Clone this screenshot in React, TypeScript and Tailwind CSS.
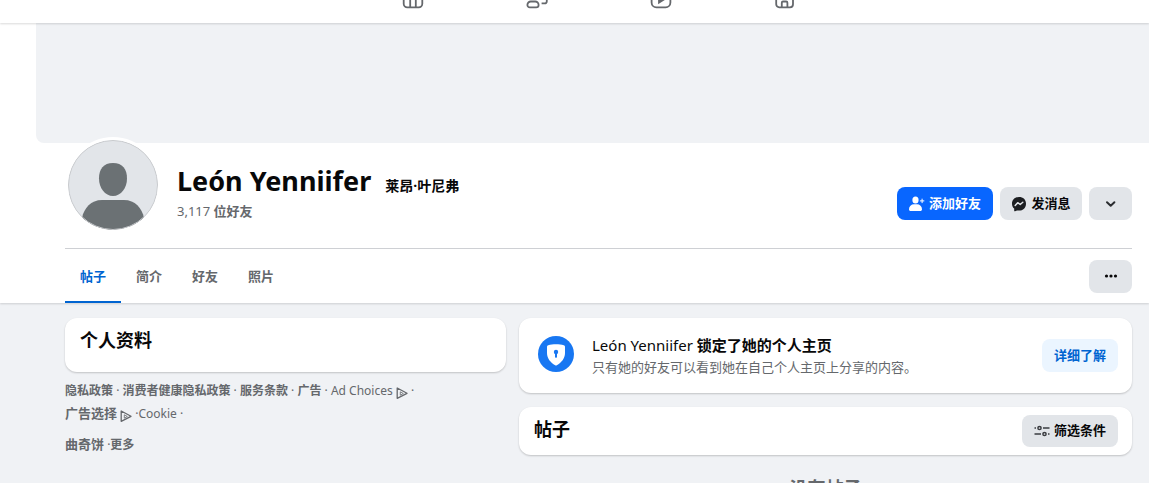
import type { ReactNode } from "react";

const navIcons: { label: string; icon: ReactNode }[] = [
  {
    label: "群组",
    icon: (
      <>
        <rect x="2.7" y="3" width="18.6" height="18.3" rx="3.6" />
        <path d="M9.2 3v18.3M14.8 3v18.3" />
      </>
    ),
  },
  {
    label: "好友",
    icon: (
      <>
        <circle cx="8" cy="8" r="4" />
        <path d="M5.8 15.5h4.400a3.400 3.400 0 0 1 3.400 3.400c0 1.500-1 2.400-2.400 2.400H4.800c-1.400 0-2.400-.9-2.400-2.400a3.400 3.400 0 0 1 3.400-3.400z" />
        <path d="M16 5a3.500 3.500 0 0 1 0 7M16.600 17.400H19.600q2.200 0 2.200-2.200V14" />
      </>
    ),
  },
  {
    label: "视频",
    icon: (
      <>
        <rect x="2.6" y="3" width="18.8" height="18.3" rx="4.8" />
        <path d="M10 8.800l6.200 3.900-6.200 3.900z" fill="currentColor" />
      </>
    ),
  },
  {
    label: "商城",
    icon: (
      <>
        <path d="M3.200 10v8.300a3 3 0 0 0 3 3h10.800a3 3 0 0 0 3-3V10" />
        <path d="M2.600 9l2-6h14l2 6a3 3 0 0 1-6 0 3 3 0 0 1-6 0 3 3 0 0 1-6 0z" />
        <path d="M8.800 21v-4.300q0-1.200 1.200-1.200h3.200q1.200 0 1.200 1.200V21" />
      </>
    ),
  },
];

const tabs = ["帖子", "简介", "好友", "照片"];

function AdIcon() {
  return (
    <svg viewBox="0 0 12 12" className="inline-block size-3 align-[-4px]" fill="none" stroke="currentColor" strokeWidth="1.300" strokeLinejoin="round" aria-hidden="true">
      <path d="M1.200 1v10.300l9.800-5z" />
      <path d="M4.300 4.800v3.400l3-1.700z" strokeWidth="0.800" />
    </svg>
  );
}

function PersonAddIcon() {
  return (
    <svg viewBox="0 0 16 16" className="size-4" fill="currentColor" aria-hidden="true">
      <ellipse cx="6.500" cy="4.100" rx="3.100" ry="3.500" />
      <path d="M5 8.300h3a5 5 0 0 1 5 5c0 1.200-.7 1.800-1.700 1.800H1.700c-1 0-1.700-.6-1.700-1.800a5 5 0 0 1 5-5z" />
      <path d="M13.100 2.700v4.400M10.900 4.900h4.400" stroke="currentColor" strokeWidth="1" />
    </svg>
  );
}

function MessengerIcon() {
  return (
    <svg viewBox="0 0 16 16" className="size-4" aria-hidden="true">
      <path d="M8 1C3.900 1 1 3.900 1 7.700c0 2 .8 3.700 2.200 4.900v2.100c0 .5.500.8.900.6l1.900-.9c.6.200 1.300.2 2 .2 4.100 0 7-2.900 7-6.900S12.100 1 8 1z" fill="#1c1e21" />
      <path d="M4.200 9.500l2.500-2.800 2.500 1.800 2.600-2.200" fill="none" stroke="#e2e5e9" strokeWidth="1.500" strokeLinejoin="round" strokeLinecap="round" />
    </svg>
  );
}

export default function App() {
  return (
    <div className="h-screen overflow-hidden bg-[#f0f2f5] font-['Noto_Sans','Noto_Sans_CJK_SC',sans-serif] text-[#080809]">
      <header className="relative bg-white shadow-[0_1px_2px_rgba(0,0,0,0.15)]">
        <nav className="flex h-[23px] items-end justify-center overflow-hidden pb-[13px] pl-12" aria-label="主导航">
          {navIcons.map(({ label, icon }) => (
            <a key={label} href="#" aria-label={label} className="flex w-[124px] justify-center text-[#65686c]">
              <svg viewBox="0 0 24 24" className="size-6" fill="none" stroke="currentColor" strokeWidth="1.800">
                {icon}
              </svg>
            </a>
          ))}
        </nav>
      </header>

      <section className="bg-white shadow-[0_1px_2px_rgba(0,0,0,0.15)]">
        <div className="ml-9 h-[120px] rounded-bl-lg bg-[#f0f2f5]" />
        <div className="pl-[65px] pr-[17px]">
          <div className="flex h-[106px] items-start border-b border-[#ced0d4]">
            <div className="-mt-1.5 shrink-0 rounded-full bg-white p-[3px]">
              <svg viewBox="0 0 90 90" className="size-[90px] rounded-full" role="img" aria-label="León Yenniifer">
                <clipPath id="avatar-clip">
                  <circle cx="45" cy="45" r="45" />
                </clipPath>
                <g clipPath="url(#avatar-clip)">
                  <rect width="90" height="90" fill="#e2e5e9" />
                  <path d="M45 23c9.500 0 14 6 14 15.500S53 56 45 56s-14-8-14-17.500S35.500 23 45 23z" fill="#6b7174" />
                  <path d="M34 60h22c11 0 18 8 20 18v15H14V78c2-10 9-18 20-18z" fill="#6b7174" />
                </g>
                <circle cx="45" cy="45" r="44.500" fill="none" stroke="#c9cbce" />
              </svg>
            </div>
            <div className="ml-4 flex-1 pt-5">
              <h1 className="flex items-baseline gap-3.5 text-[27px] leading-9 font-bold whitespace-nowrap">
                León Yenniifer
                <span className="text-sm leading-none">莱昂·叶尼弗</span>
              </h1>
              <p className="h-6 text-[13px] leading-6 text-[#65686c]">
                3,117 <span className="font-bold">位好友</span>
              </p>
            </div>
            <div className="flex gap-[7px] pt-11 text-[13px] font-bold whitespace-nowrap">
              <button className="flex h-[33px] w-24 items-center justify-center gap-1 rounded-lg bg-[#0866ff] text-white">
                <PersonAddIcon />
                添加好友
              </button>
              <button className="flex h-[33px] w-[82px] items-center justify-center gap-1 rounded-lg bg-[#e2e5e9]">
                <MessengerIcon />
                发消息
              </button>
              <button aria-label="更多选项" className="flex h-[33px] w-[43px] items-center justify-center rounded-lg bg-[#e2e5e9]">
                <svg viewBox="0 0 12 12" className="size-3" fill="none" stroke="#2b2d30" strokeWidth="2" strokeLinecap="round" strokeLinejoin="round">
                  <path d="M2 4.200l3.700 3.500 3.700-3.500" />
                </svg>
              </button>
            </div>
          </div>
          <div className="flex h-[54px] items-center justify-between">
            <nav className="flex h-full text-[13px] font-bold" aria-label="个人主页">
              {tabs.map((tab, i) => (
                <a
                  key={tab}
                  href="#"
                  className={
                    i === 0
                      ? "flex w-14 items-center justify-center border-t-4 border-b-2 border-t-transparent border-b-[#0064d1] text-[#0064d1]"
                      : "flex w-14 items-center justify-center border-t-4 border-b-2 border-transparent text-[#65686c]"
                  }
                >
                  {tab}
                </a>
              ))}
            </nav>
            <button aria-label="更多" className="flex h-[33px] w-[43px] items-center justify-center rounded-lg bg-[#e2e5e9]">
              <svg viewBox="0 0 14 4" className="h-1 w-3.5" fill="#080809">
                <circle cx="2.500" cy="2" r="1.600" />
                <circle cx="7" cy="2" r="1.600" />
                <circle cx="11.500" cy="2" r="1.600" />
              </svg>
            </button>
          </div>
        </div>
      </section>

      <main className="grid grid-cols-[441fr_613fr] items-start gap-x-[13px] pt-[15px] pr-[17px] pl-[65px]">
        <div>
          <section className="h-[54px] rounded-xl bg-white px-[15px] pt-2 shadow-[0_1px_2px_rgba(0,0,0,0.2)]">
            <h2 className="text-lg leading-7 font-bold">个人资料</h2>
          </section>
          <footer className="pt-[7px] text-xs leading-[23px] text-[#65686c]">
            <p className="h-[23px]">
              <a href="#" className="font-bold">隐私政策</a> · <a href="#" className="font-bold">消费者健康隐私政策</a> ·{" "}
              <a href="#" className="font-bold">服务条款</a> · <a href="#" className="font-bold">广告</a> ·{" "}
              <a href="#">
                Ad Choices <AdIcon />
              </a>{" "}
              ·
            </p>
            <p className="h-[23px]">
              <a href="#">
                <span className="text-[13px] font-bold">广告选择</span> <AdIcon />
              </a>{" "}
              ·<a href="#">Cookie</a> ·
            </p>
            <p className="pt-2">
              <a href="#" className="text-[13px] font-bold">曲奇饼</a> ·<a href="#" className="font-bold">更多</a>
            </p>
          </footer>
        </div>

        <div>
          <section className="flex h-[75px] items-center rounded-xl bg-white pr-3.5 pl-[19px] shadow-[0_1px_2px_rgba(0,0,0,0.2)]">
            <svg viewBox="0 0 36 36" className="mb-1 size-9 shrink-0" aria-hidden="true">
              <circle cx="18" cy="18" r="18" fill="#1877f2" />
              <path d="M18 8.200c3 0 5.500.4 7.800 1 .8.200 1.200.7 1.200 1.500V17c0 5.500-3.500 9.500-8.200 12.200q-.8.400-1.600 0C12.500 26.500 9 22.500 9 17v-6.300c0-.8.400-1.300 1.200-1.500 2.300-.6 4.800-1 7.800-1z" fill="#fff" />
              <circle cx="18" cy="16" r="2.200" fill="#1877f2" />
              <path d="M17 16h2v4.700q0 1-.7 1h-.6q-.7 0-.7-1z" fill="#1877f2" />
            </svg>
            <div className="ml-[18px] flex-1">
              <h3 className="text-[15px] leading-[22px] font-normal">
                León Yenniifer <strong className="font-bold">锁定了她的个人主页</strong>
              </h3>
              <p className="text-[13px] leading-[22px] text-[#65686c]">只有她的好友可以看到她在自己个人主页上分享的内容。</p>
            </div>
            <button className="h-[33px] w-[76px] rounded-lg bg-[#ebf5ff] text-[13px] font-bold whitespace-nowrap text-[#0064d1]">详细了解</button>
          </section>
          <section className="mt-3.5 flex h-12 items-center justify-between rounded-xl bg-white pr-3.5 pl-[15px] shadow-[0_1px_2px_rgba(0,0,0,0.2)]">
            <h2 className="pb-1 text-lg leading-7 font-bold">帖子</h2>
            <button className="flex h-8 w-24 items-center justify-center gap-1 rounded-lg bg-[#e2e5e9] text-[13px] font-bold whitespace-nowrap">
              <svg viewBox="0 0 16 16" className="size-4" fill="none" stroke="#3a3c40" strokeWidth="1.500" aria-hidden="true">
                <path d="M.5 5h1.500M9 5h6.500M.5 11h6.500M14 11h1.500" />
                <circle cx="5.500" cy="5" r="1.600" />
                <circle cx="10.500" cy="11" r="1.600" />
              </svg>
              筛选条件
            </button>
          </section>
          <p className="pt-[19px] text-center text-lg leading-7 font-bold text-[#65686c]">没有帖子</p>
        </div>
      </main>
    </div>
  );
}
